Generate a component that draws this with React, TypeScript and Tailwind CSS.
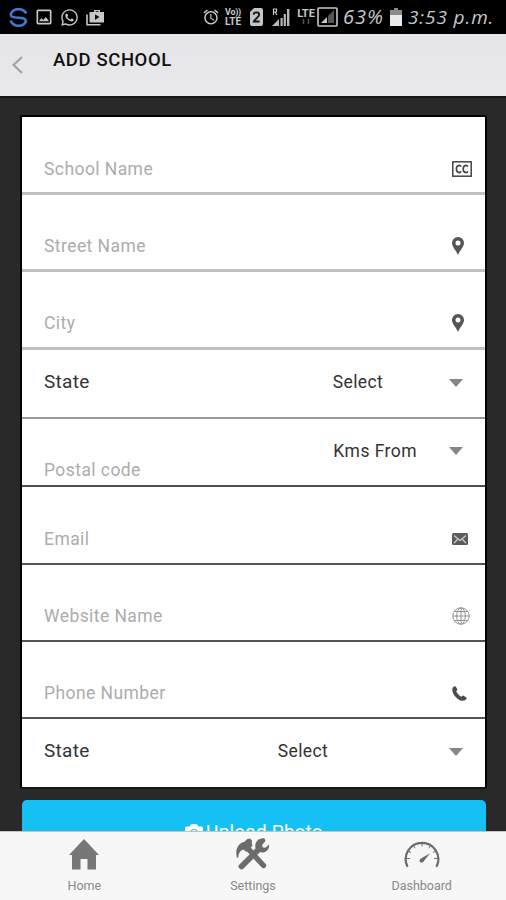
import type { ReactNode } from 'react'
import { MdAlarm, MdOutlineImage } from 'react-icons/md'
import { FaCamera, FaWhatsapp } from 'react-icons/fa'

function SimIcon() {
  return (
    <svg width="13" height="18" viewBox="0 0 13 18">
      <path d="M4 0h7a2 2 0 0 1 2 2v14a2 2 0 0 1-2 2H2a2 2 0 0 1-2-2V4z" fill="#c4c4c4" />
      <path d="M3.6 6.6c.3-3 5.600-3 5.600.2 0 2-4.800 4.600-5.400 6.700h5.800" fill="none" stroke="#111" strokeWidth="1.800" />
    </svg>
  )
}

function StatusBar() {
  return (
    <div className="flex h-[34px] shrink-0 items-center bg-black text-[#c8c8c8]">
      <svg className="ml-[9px]" width="19" height="19" viewBox="0 0 19 19" fill="none" stroke="#3f78cf" strokeWidth="2.600">
        <path d="M17.200 5.500C14.500-.4 4.500-.4 2 5.500c-1 3.700 3 4 7.500 4.200s8 1 7.300 4.300" />
        <path d="M1.500 12.500c3 7 13 6.800 15.500.8" />
      </svg>
      <MdOutlineImage className="ml-[6px] size-[20px]" />
      <FaWhatsapp className="ml-[6px] size-[19px]" />
      <svg className="ml-[7px]" width="18" height="17" viewBox="0 0 18 17">
        <path d="M1 5.500V15.800h13.500" fill="none" stroke="#c8c8c8" strokeWidth="1.600" />
        <path d="M8 3V1h6v2h4v10.500H3.500V3zm1.500 0h3V2.200h-3z" fill="#c8c8c8" />
        <path d="M9 5.300v5.600l4.500-2.800z" fill="#111" />
      </svg>
      <MdAlarm className="ml-[98px] size-[18px]" />
      <div className="ml-[4px] w-[18px] text-center font-['Roboto',sans-serif] text-[10px] leading-[9px] font-bold">
        <div className="text-[9px] tracking-[-0.3px]">Vo))</div>
        <div>LTE</div>
      </div>
      <span className="ml-[8px]">
        <SimIcon />
      </span>
      <svg className="ml-[9px]" width="18" height="19" viewBox="0 0 18 19">
        <path d="M1.500 7V1h3v3h-3M3 4l2 3" fill="none" stroke="#c8c8c8" strokeWidth="1.200" />
        <path d="M0 18l7-7v7zM8.500 10h2.200v8H8.500zM11.700 6h2.200v12h-2.200zM15 1h2.400v17H15z" fill="#b8b8b8" />
      </svg>
      <div className="ml-[6px] flex h-[19px] w-[20px] flex-col items-center font-['Roboto',sans-serif] text-[11px] leading-[11px] font-bold">
        LTE
        <svg width="10" height="6" viewBox="0 0 10 6" fill="none" stroke="#555" strokeWidth="1.500">
          <path d="M2.500 0v5M7.500 0v5" />
        </svg>
      </div>
      <svg className="ml-[1px]" width="21" height="20" viewBox="0 0 21 20">
        <rect x="1" y="1" width="19" height="18" rx="1" fill="none" stroke="#c8c8c8" strokeWidth="1.600" />
        <path d="M11 16V9l6-6v13z" fill="#555" />
        <path d="M4 16l6-6v6z" fill="#c8c8c8" />
      </svg>
      <span className="ml-[5px] w-[44px] font-['Open_Sans',sans-serif] text-[20px] tracking-[1px] whitespace-nowrap italic">63%</span>
      <svg className="ml-[3px]" width="12" height="18" viewBox="0 0 12 18">
        <path d="M4 0h4v2H4z" fill="#888" />
        <rect y="2" width="12" height="16" fill="#8c8c8c" />
        <rect y="7" width="12" height="11" fill="#ececec" />
      </svg>
      <span className="ml-[6px] font-['Open_Sans',sans-serif] text-[19px] tracking-[0.900px] whitespace-nowrap italic">3:53 p.m.</span>
    </div>
  )
}

function CcIcon() {
  return (
    <svg width="20" height="16" viewBox="0 0 20 16" fill="none" stroke="#444">
      <rect x="0.800" y="0.800" width="18.400" height="14.400" strokeWidth="1.500" />
      <path d="M9 5.800C8.300 3.800 4.400 3.800 4.400 8s3.900 4.200 4.600 2.200M15.800 5.800c-.7-2-4.600-2-4.600 2.200s3.900 4.200 4.600 2.200" strokeWidth="1.700" />
    </svg>
  )
}

function PinIcon() {
  return (
    <svg width="12" height="18" viewBox="0 0 12 18">
      <path d="M6 0a6 6 0 0 0-6 6c0 4 4 7 6 12 2-5 6-8 6-12a6 6 0 0 0-6-6zm0 3.600a2.500 2.500 0 1 1 0 5 2.500 2.500 0 0 1 0-5z" fill="#555" />
    </svg>
  )
}

function MailIcon() {
  return (
    <svg width="16" height="12" viewBox="0 0 16 12">
      <rect width="16" height="12" rx="1.500" fill="#5c5c5c" />
      <path d="M2 2.500l6 5 6-5M2 10l3.500-3.500M14 10l-3.500-3.500" fill="none" stroke="#d4d4d4" strokeWidth="1.100" />
    </svg>
  )
}

function GlobeIcon() {
  return (
    <svg width="18" height="18" viewBox="0 0 18 18" fill="none" stroke="#949494" strokeWidth="1">
      <circle cx="9" cy="9" r="8.200" />
      <ellipse cx="9" cy="9" rx="4.300" ry="8.200" />
      <path d="M9 .8v16.400M.8 9h16.400M2.300 4.500h13.400M2.300 13.500h13.400" />
    </svg>
  )
}

function PhoneIcon() {
  return (
    <svg width="15" height="15" viewBox="0 0 15 15">
      <path d="M2.700.3C1 .8 0 2.400.3 4.500c.8 5 5.500 9.700 9.800 10.300 2 .2 3.700-.6 4.500-2.200.2-.5.100-.9-.3-1.200l-2.700-1.700c-.4-.2-.8-.2-1.100.1l-1.100 1C7.600 10 5.200 7.400 4.200 5.200l.9-1c.3-.3.300-.6.200-1L3.900.7C3.700.3 3.200.1 2.700.3z" fill="#4c4c4c" />
    </svg>
  )
}

function Caret() {
  return (
    <svg className="mr-[22px] shrink-0" width="14" height="8" viewBox="0 0 14 8">
      <path d="M0 0h14L7 8z" fill="#868686" />
    </svg>
  )
}

function InputRow({ label, icon, className }: { label: string; icon: ReactNode; className: string }) {
  return (
    <div className={`flex shrink-0 items-end pl-[22px] text-[17.500px] tracking-[0.430px] text-[#acacac] ${className}`}>
      <span className="flex-1 leading-5">{label}</span>
      <span className="flex h-5 w-[33px] items-center">{icon}</span>
    </div>
  )
}

function SelectRow({ className, valueClass }: { className: string; valueClass: string }) {
  return (
    <div className={`flex shrink-0 items-center pl-[22px] text-[#333] ${className}`}>
      <span className="text-[19px] tracking-[0.300px]">State</span>
      <span className={`ml-auto text-[17.500px] tracking-[0.350px] ${valueClass}`}>Select</span>
      <Caret />
    </div>
  )
}

function Tab({ label, icon }: { label: string; icon: ReactNode }) {
  return (
    <div className="flex flex-1 flex-col items-center">
      <span className="flex h-[44px] items-center">{icon}</span>
      <span className="mt-[2px] text-[12.500px] leading-4">{label}</span>
    </div>
  )
}

function HomeIcon() {
  return (
    <svg width="30" height="31" viewBox="0 0 30 31">
      <path d="M15 0L0 16h3v14.500h8.500V20h7v10.500H27V16h3z" fill="#777" />
    </svg>
  )
}

function ToolsIcon() {
  return (
    <svg width="34" height="32" viewBox="0 0 34 32">
      <path d="M5.500 28.500L23.500 10.500" stroke="#6c6c6c" strokeWidth="5.800" strokeLinecap="round" fill="none" />
      <path d="M29.500 3L26 7l.8 2.500 2.600.3L33 6.500c.7 4.500-2.500 8-7 8-4 0-6.800-3-6.800-6.500C19.200 3.500 23.500-.5 28.500.5z" fill="#6c6c6c" />
      <path d="M11.500 11L14.500 14.400" stroke="#f7f7f7" strokeWidth="7" fill="none" />
      <path d="M11 9.500L27.500 27.500" stroke="#6c6c6c" strokeWidth="5.400" strokeLinecap="round" fill="none" />
      <path d="M.8 19.500C-1 11.500 2 5.200 8.500 3.800L11 1.200l3-.8 2 2-.3 2.300.8 3.300-6.300 6-2.700-2.500C4 12.500 2.300 15.500 2.300 19.500z" fill="#6c6c6c" />
    </svg>
  )
}

function GaugeIcon() {
  return (
    <svg width="36" height="28" viewBox="0 0 36 28" fill="none" stroke="#6c6c6c">
      <path d="M3.200 26A16.300 16.300 0 1 1 32.800 26" strokeWidth="2.200" strokeLinecap="round" />
      <path d="M18 3v3.500M9.500 5.500l1.700 2.700M26.500 5.500l-1.700 2.700M4 11l3 1.500M32 11l-3 1.500M2 18.500h4M34 18.500h-4" strokeWidth="1" />
      <path d="M26 13.200l-9.500 5.600c-2.500 2.200.4 5.300 2.900 2.900z" fill="#6c6c6c" stroke="none" />
    </svg>
  )
}

export default function App() {
  return (
    <div className="flex h-[900px] w-[506px] flex-col overflow-hidden bg-[#292929] font-['Roboto',sans-serif]">
      <StatusBar />
      <header className="flex h-[64px] shrink-0 border-b-2 border-[#161616] bg-linear-to-b from-[#e5e5e7] to-[#e9e9eb]">
        <svg className="mt-[22px] ml-[12px]" width="11" height="18" viewBox="0 0 11 18" fill="none" stroke="#a0a0a0" strokeWidth="2">
          <path d="M10 1L1.500 9l8.500 8" />
        </svg>
        <h1 className="mt-[14px] ml-[30px] text-[18.500px] leading-6 font-medium tracking-[0.600px] text-[#111]">ADD SCHOOL</h1>
      </header>

      <main className="flex flex-1 flex-col overflow-hidden pt-[17px] pr-[19px] pl-[20px]">
        <div className="flex shrink-0 flex-col rounded-[2px] border-2 border-black border-b-[#161616] bg-white">
          <InputRow label="School Name" icon={<CcIcon />} className="h-[78px] border-b-3 border-[#c0c0c0] pb-[13px]" />
          <InputRow label="Street Name" icon={<PinIcon />} className="h-[77px] border-b-3 border-[#c0c0c0] pb-[13px]" />
          <InputRow label="City" icon={<PinIcon />} className="h-[78px] border-b-3 border-[#c0c0c0] pb-[14px]" />
          <SelectRow className="h-[69px] border-b-2 border-[#999] pb-[2px]" valueClass="mr-[66px]" />
          <div className="flex h-[68px] shrink-0 border-b-2 border-[#505050] pl-[22px]">
            <span className="mt-[41px] text-[17.500px] leading-5 tracking-[0.430px] text-[#acacac]">Postal code</span>
            <div className="mb-[2px] ml-auto flex items-center text-[#333]">
              <span className="mr-[32px] text-[17.500px] tracking-[0.450px]">Kms From</span>
              <Caret />
            </div>
          </div>
          <InputRow label="Email" icon={<MailIcon />} className="h-[78px] border-b-2 border-[#555] pb-[14px]" />
          <InputRow label="Website Name" icon={<GlobeIcon />} className="h-[77px] border-b-2 border-[#555] pb-[14px]" />
          <InputRow label="Phone Number" icon={<PhoneIcon />} className="h-[77px] border-b-2 border-[#555] pb-[14px]" />
          <SelectRow className="h-[68px] pb-[3px]" valueClass="mr-[121px]" />
        </div>
        <button
          type="button"
          className="mr-px ml-[2px] mt-[11px] flex h-[64px] shrink-0 items-center justify-center gap-[3px] rounded-[5px] bg-[#15c0f4] text-[19px] tracking-[0.200px] text-white"
        >
          <FaCamera className="size-[18px]" />
          Upload Photo
        </button>
      </main>

      <nav className="flex h-[69px] shrink-0 border-t border-[#c4c4c4] bg-[#f7f7f7] text-[#888]">
        <Tab label="Home" icon={<HomeIcon />} />
        <Tab label="Settings" icon={<ToolsIcon />} />
        <Tab label="Dashboard" icon={<GaugeIcon />} />
      </nav>
    </div>
  )
}
